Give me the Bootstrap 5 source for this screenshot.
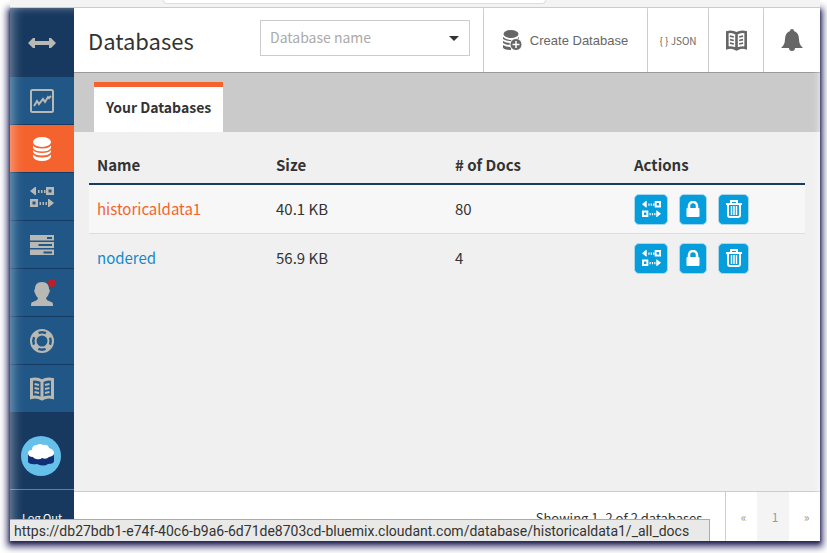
<!DOCTYPE html>
<html lang="en">
<head>
<meta charset="utf-8">
<meta name="viewport" content="width=device-width, initial-scale=1">
<title>Databases</title>
<link href="https://cdn.jsdelivr.net/npm/bootstrap@5.3.0/dist/css/bootstrap.min.css" rel="stylesheet">
<style>
body{font-family:"Noto Sans CJK SC","Noto Sans",sans-serif;font-size:15px;line-height:24px;color:#333;background:#fff}
.frame-top{height:8px;margin:0 7px 0 10px;background:#f3f3f3;border-bottom:1px solid #ccc;position:relative;z-index:1;flex:none}
.frame-tab{width:383px;max-width:60%;height:4px;margin-left:153px;background:#fff;border:1px solid #ddd;border-top:0;border-radius:0 0 4px 4px}
.app-window{margin:0 7px 12px 10px;min-height:0;box-shadow:0 2px 3px #26264e,0 3px 7px 3px #48487c}
.app-window::after{content:"";position:absolute;inset:0;pointer-events:none;box-shadow:inset 5px 0 12px -3px rgba(255,255,255,.45),inset -5px 0 10px -5px rgba(255,255,255,.7)}
.side{width:64px;background:#18395f;color:#b8b8b5;flex:none}
.side-toggle{height:69px;flex:none}
.side a,.side button{color:#b8b8b5}
.side-item{height:48px;background:#215786;border-bottom:1px solid #153c64;flex:none}
.side-item.active{background:#f4632e;color:#fff}
.side-item:last-child{border-bottom:0;height:47px}
.logo{margin:24px 2px 13px 0;flex:none}
.logout{height:52px;padding-top:15px;border-top:1px solid #3a8dc9;font-size:11px;color:#fff!important;flex:none}
.topbar{height:65px;border-bottom:1px solid #999;background:#fff;flex:none}
.topbar h1{font-size:22px;line-height:32px;padding:0 0 0 14px}
.search{width:210px;height:36px;margin:12px 13px 0 0;border:1px solid #ccc;flex:none;background:#fff}
.search input{border:0;outline:0;padding:0 9px 2px;min-width:0;background:none;font-size:14px}
.search input::placeholder{color:#aaa;opacity:1}
.search button{width:30px;color:#333}
.top-action{border-left:1px solid #ccc;color:#666}
.create{width:164px;font:13px "Liberation Sans",sans-serif}
.json{width:61px;font-size:10px}
.docs{width:55px}.alerts{width:57px}
.tabs-row{height:59px;padding:9px 20px 0;background:#cacaca;flex:none}
.main-tab{height:50px;padding:0 12px 5px;border-top:5px solid #f4632e;background:#fff;color:#333;font-size:14px;font-weight:700}
.content-area{background:#f0f0f0;padding:14px 15px 0;min-height:0}
.db-table{--bs-table-bg:transparent;--bs-table-color:#333;margin:0;table-layout:fixed;color:#333}
.db-table th{height:38px;padding:0 8px;border-bottom:2px solid #153c64;vertical-align:middle}
.db-table td{height:49px;padding:1px 8px 0;border-bottom:1px solid #ddd;vertical-align:middle}
.db-table tr:last-child td{border-bottom:0}
.db-table tbody tr:first-child td{background:#f7f7f7}
.db-table a{color:#1389cc;text-decoration:none}
.db-table .hot a{color:#f4632e}
.act{height:31px;width:31px;border-radius:5px;background:#069ddd;color:#fff;border:1px solid #a9d8ec;padding:0}
.act-wide{width:34px}.act-slim{width:28px}
.act-set{gap:11px}
.pager{height:50px;border-top:1px solid #ccc;background:#fff;font-size:13px;flex:none}
.pager .count{padding:2px 19px 0 0}
.pager-links{border-left:1px solid #ccc}
.pager-links a{width:31px;padding-left:4px;color:#999;font-size:12px}
.pager-links .now{width:32px;background:#f4f4f4}
.status-url{left:0;bottom:0;z-index:3;height:22px;min-width:700px;padding:0 4px;background:#e9e9e7;border:1px solid #aaa;border-left:0;border-bottom:0;font:14px/22px Roboto,sans-serif;color:#333;white-space:nowrap}
svg{display:block}
</style>
<script src="https://cdn.jsdelivr.net/npm/bootstrap@5.3.0/dist/js/bootstrap.bundle.min.js"></script>
</head>
<body class="vh-100 d-flex flex-column overflow-hidden">
<svg class="d-none" aria-hidden="true">
<symbol id="repl" viewBox="0 0 24 20"><path fill="currentColor" d="M0 4l5-4h1v8H5zM8 3h1.500v3H8zm3 0h1.500v3H11zm3 0h1.500v3H14zM16 0h8v8h-8zm2.500 2.500v3h3v-3zM0 12h8v8H0zm2.500 2.500v3h3v-3zM9.500 15H11v3H9.500zm3 0H14v3h-1.500zm3 0H17v3h-1.500zM18 12h1l5 4-5 4h-1z" fill-rule="evenodd"/></symbol>
<symbol id="book" viewBox="0 0 24 24"><path fill="none" stroke="currentColor" stroke-width="3" d="M1.500 2.500Q7 1 12 4 17 1 22.500 2.500V20.500Q17 19 12 22 7 19 1.500 20.500zM12 4V22"/><path fill="none" stroke="currentColor" stroke-width="2" d="M4.500 7l4.500 1M4.500 11l4.500 1M4.500 15l4.500 1M15 8l4.500-1M15 12l4.500-1M15 16l4.500-1"/></symbol>
<symbol id="stack" viewBox="0 0 20 24"><g fill="currentColor"><ellipse cx="10" cy="5" rx="9" ry="5"/><path d="M1 8.500Q3 11.500 10 11.500T19 8.500V11Q17 14.500 10 14.500T1 11zM1 13Q3 16 10 16T19 13V15Q17 18.500 10 18.500T1 15zM1 17.500Q3 20.500 10 20.500T19 17.500V20Q17 24 10 24T1 20z"/></g></symbol>
<symbol id="lock" viewBox="0 0 14 17"><path d="M3 8V5a4 4 0 0 1 8 0v3" fill="none" stroke="currentColor" stroke-width="2.500"/><rect x="0.500" y="7" width="13" height="9" rx="1" fill="currentColor"/></symbol>
<symbol id="trash" viewBox="0 0 16 18"><path fill="none" stroke="currentColor" stroke-width="2" d="M0 4h16M5 3V1h6v2M2 5v10q0 2 2 2h8q2 0 2-2V5"/><path stroke="currentColor" stroke-width="1.500" d="M5.500 6v9M8 6v9M10.500 6v9"/></symbol>
</svg>
<div class="frame-top"><div class="frame-tab"></div></div>
<div class="app-window position-relative d-flex flex-fill">
<aside class="side d-flex flex-column overflow-hidden">
<button class="side-toggle btn border-0 rounded-0 p-0 d-flex align-items-center justify-content-center" aria-label="Collapse menu"><svg width="28" height="12" viewBox="0 0 28 12"><path fill="currentColor" d="M0 6l5-5h2v3h14V1h2l5 5-5 5h-2V8H7v3H5z"/></svg></button>
<nav class="d-flex flex-column">
<a href="#" aria-label="Dashboard" class="side-item d-flex align-items-center justify-content-center"><svg width="24" height="24" viewBox="0 0 24 24" fill="none" stroke="currentColor"><rect x="1" y="1" width="22" height="22" rx="1.500" stroke-width="2"/><path stroke-width="2" d="M4 17l3-5 2 3 4-5 2 3 3-5 1 1 2-2"/></svg></a>
<a href="#" aria-label="Databases" aria-current="page" class="side-item active d-flex align-items-center justify-content-center"><svg width="20" height="24"><use href="#stack"/></svg></a>
<a href="#" aria-label="Replication" class="side-item d-flex align-items-center justify-content-center"><svg width="24" height="20"><use href="#repl"/></svg></a>
<a href="#" aria-label="Active tasks" class="side-item d-flex align-items-center justify-content-center"><svg width="24" height="20" viewBox="0 0 24 20"><path fill="currentColor" d="M0 0h24v5.500H0zM0 7h24v6H0zM0 14.500h24V20H0z"/><path fill="#215786" d="M17 2h5v2h-5zM8.500 9H22v2H8.500zM13.500 16.500H22v2h-8.500z"/></svg></a>
<a href="#" aria-label="Account" class="side-item d-flex align-items-center justify-content-center"><svg width="28" height="28" viewBox="0 0 28 28"><path fill="currentColor" d="M14 3c5 0 7 3 7 7 1 0 1 3 0 4-1 3-2 4-3 5 0 2 3 3 5 4 2 0 2 2 2 4H3c0-2 0-4 2-4 2-1 5-2 5-4-1-1-2-2-3-5-1-1-1-4 0-4 0-4 2-7 7-7z"/><circle cx="24" cy="4" r="4" fill="#b7202d"/></svg></a>
<a href="#" aria-label="Support" class="side-item d-flex align-items-center justify-content-center"><svg width="24" height="24" viewBox="0 0 24 24" fill="none" stroke="currentColor"><circle cx="12" cy="12" r="11" stroke-width="2"/><circle cx="12" cy="12" r="6.500" stroke-width="2"/><circle cx="12" cy="12" r="8.500" stroke-width="5" stroke-dasharray="6 7.350" stroke-dashoffset="-3.680"/></svg></a>
<a href="#" aria-label="Documentation" class="side-item d-flex align-items-center justify-content-center"><svg width="24" height="24"><use href="#book"/></svg></a>
</nav>
<div class="logo d-flex justify-content-center"><svg width="40" height="40" viewBox="0 0 40 40"><circle cx="20" cy="20" r="20" fill="#65c1ea"/><path fill="#112f74" d="M7 18v8q2 3 9 2 7 3 11 0 6 0 6-3v-8z"/><path fill="#fff" d="M7 17q0-3 4-3 0-5 5-5 3-2 6 0 5-1 6 3 4 1 5 4 1 4-5 5-3 3-7 1-2 2-6 1-3-1-3-2-5 0-5-4z"/></svg></div>
<a href="#" class="logout text-center text-decoration-none">Log Out</a>
</aside>
<main class="d-flex flex-column flex-grow-1 overflow-hidden">
<header class="topbar d-flex">
<h1 class="m-0 fw-normal me-auto align-self-center">Databases</h1>
<div class="search d-flex"><input type="text" class="flex-fill" placeholder="Database name" aria-label="Database name"><button class="btn border-0 p-0 d-flex align-items-center justify-content-center" aria-label="Show databases"><svg width="10" height="5"><path fill="currentColor" d="M0 0h10L5 5z"/></svg></button></div>
<button class="top-action create btn rounded-0 border-top-0 border-end-0 border-bottom-0 p-0 d-flex align-items-center justify-content-center gap-2"><svg width="19" height="21" viewBox="0 0 19 21"><g fill="currentColor"><ellipse cx="8" cy="4" rx="7.500" ry="4"/><path d="M0 7q3 3 8 3t8-3v4H8q-5 0-8-2zM0 11q3 2 8 2v2q-5 0-8-2zM0 15q3 2 8 2v3q-6 0-8-2z"/><circle cx="13" cy="14.500" r="6" stroke="#fff"/></g><path stroke="#fff" stroke-width="1.500" d="M13 11v7M9.500 14.500h7"/></svg>Create Database</button>
<button class="top-action json btn rounded-0 border-top-0 border-end-0 border-bottom-0 p-0">{ } JSON</button>
<button aria-label="API documentation" class="top-action docs btn rounded-0 border-top-0 border-end-0 border-bottom-0 p-0 d-flex align-items-center justify-content-center"><svg width="21" height="21"><use href="#book"/></svg></button>
<button aria-label="Notifications" class="top-action alerts btn rounded-0 border-top-0 border-end-0 border-bottom-0 p-0 d-flex align-items-center justify-content-center"><svg width="22" height="24" viewBox="0 0 22 24"><path fill="currentColor" d="M9 3q0-2 2-2t2 2q5 2 5 8 0 6 4 9h-8q0 3-3 3t-3-3H0q4-3 4-9 0-6 5-8z"/></svg></button>
</header>
<div class="tabs-row d-flex"><a href="#" class="main-tab d-flex align-items-center text-decoration-none">Your Databases</a></div>
<section class="content-area flex-fill">
<table class="table db-table">
<thead><tr><th>Name</th><th>Size</th><th># of Docs</th><th>Actions</th></tr></thead>
<tbody>
<tr class="hot"><td><a href="#">historicaldata1</a></td><td>40.1 KB</td><td>80</td><td><div class="act-set d-flex"><button class="act act-wide d-flex align-items-center justify-content-center" aria-label="Replicate"><svg width="19" height="16"><use href="#repl"/></svg></button><button class="act act-slim d-flex align-items-center justify-content-center" aria-label="Permissions"><svg width="14" height="17"><use href="#lock"/></svg></button><button class="act d-flex align-items-center justify-content-center" aria-label="Delete"><svg width="16" height="18"><use href="#trash"/></svg></button></div></td></tr>
<tr><td><a href="#">nodered</a></td><td>56.9 KB</td><td>4</td><td><div class="act-set d-flex"><button class="act act-wide d-flex align-items-center justify-content-center" aria-label="Replicate"><svg width="19" height="16"><use href="#repl"/></svg></button><button class="act act-slim d-flex align-items-center justify-content-center" aria-label="Permissions"><svg width="14" height="17"><use href="#lock"/></svg></button><button class="act d-flex align-items-center justify-content-center" aria-label="Delete"><svg width="16" height="18"><use href="#trash"/></svg></button></div></td></tr>
</tbody>
</table>
</section>
<footer class="pager d-flex justify-content-end"><div class="count align-self-center">Showing 1–2 of 2 databases.</div><nav class="pager-links d-flex"><a href="#" class="d-flex align-items-center justify-content-center text-decoration-none">«</a><a href="#" class="now d-flex align-items-center justify-content-center text-decoration-none">1</a><a href="#" class="d-flex align-items-center justify-content-center text-decoration-none">»</a></nav></footer>
</main>
<div class="status-url position-absolute">https://db27bdb1-e74f-40c6-b9a6-6d71de8703cd-bluemix.cloudant.com/database/historicaldata1/_all_docs</div>
</div>
</body>
</html>
